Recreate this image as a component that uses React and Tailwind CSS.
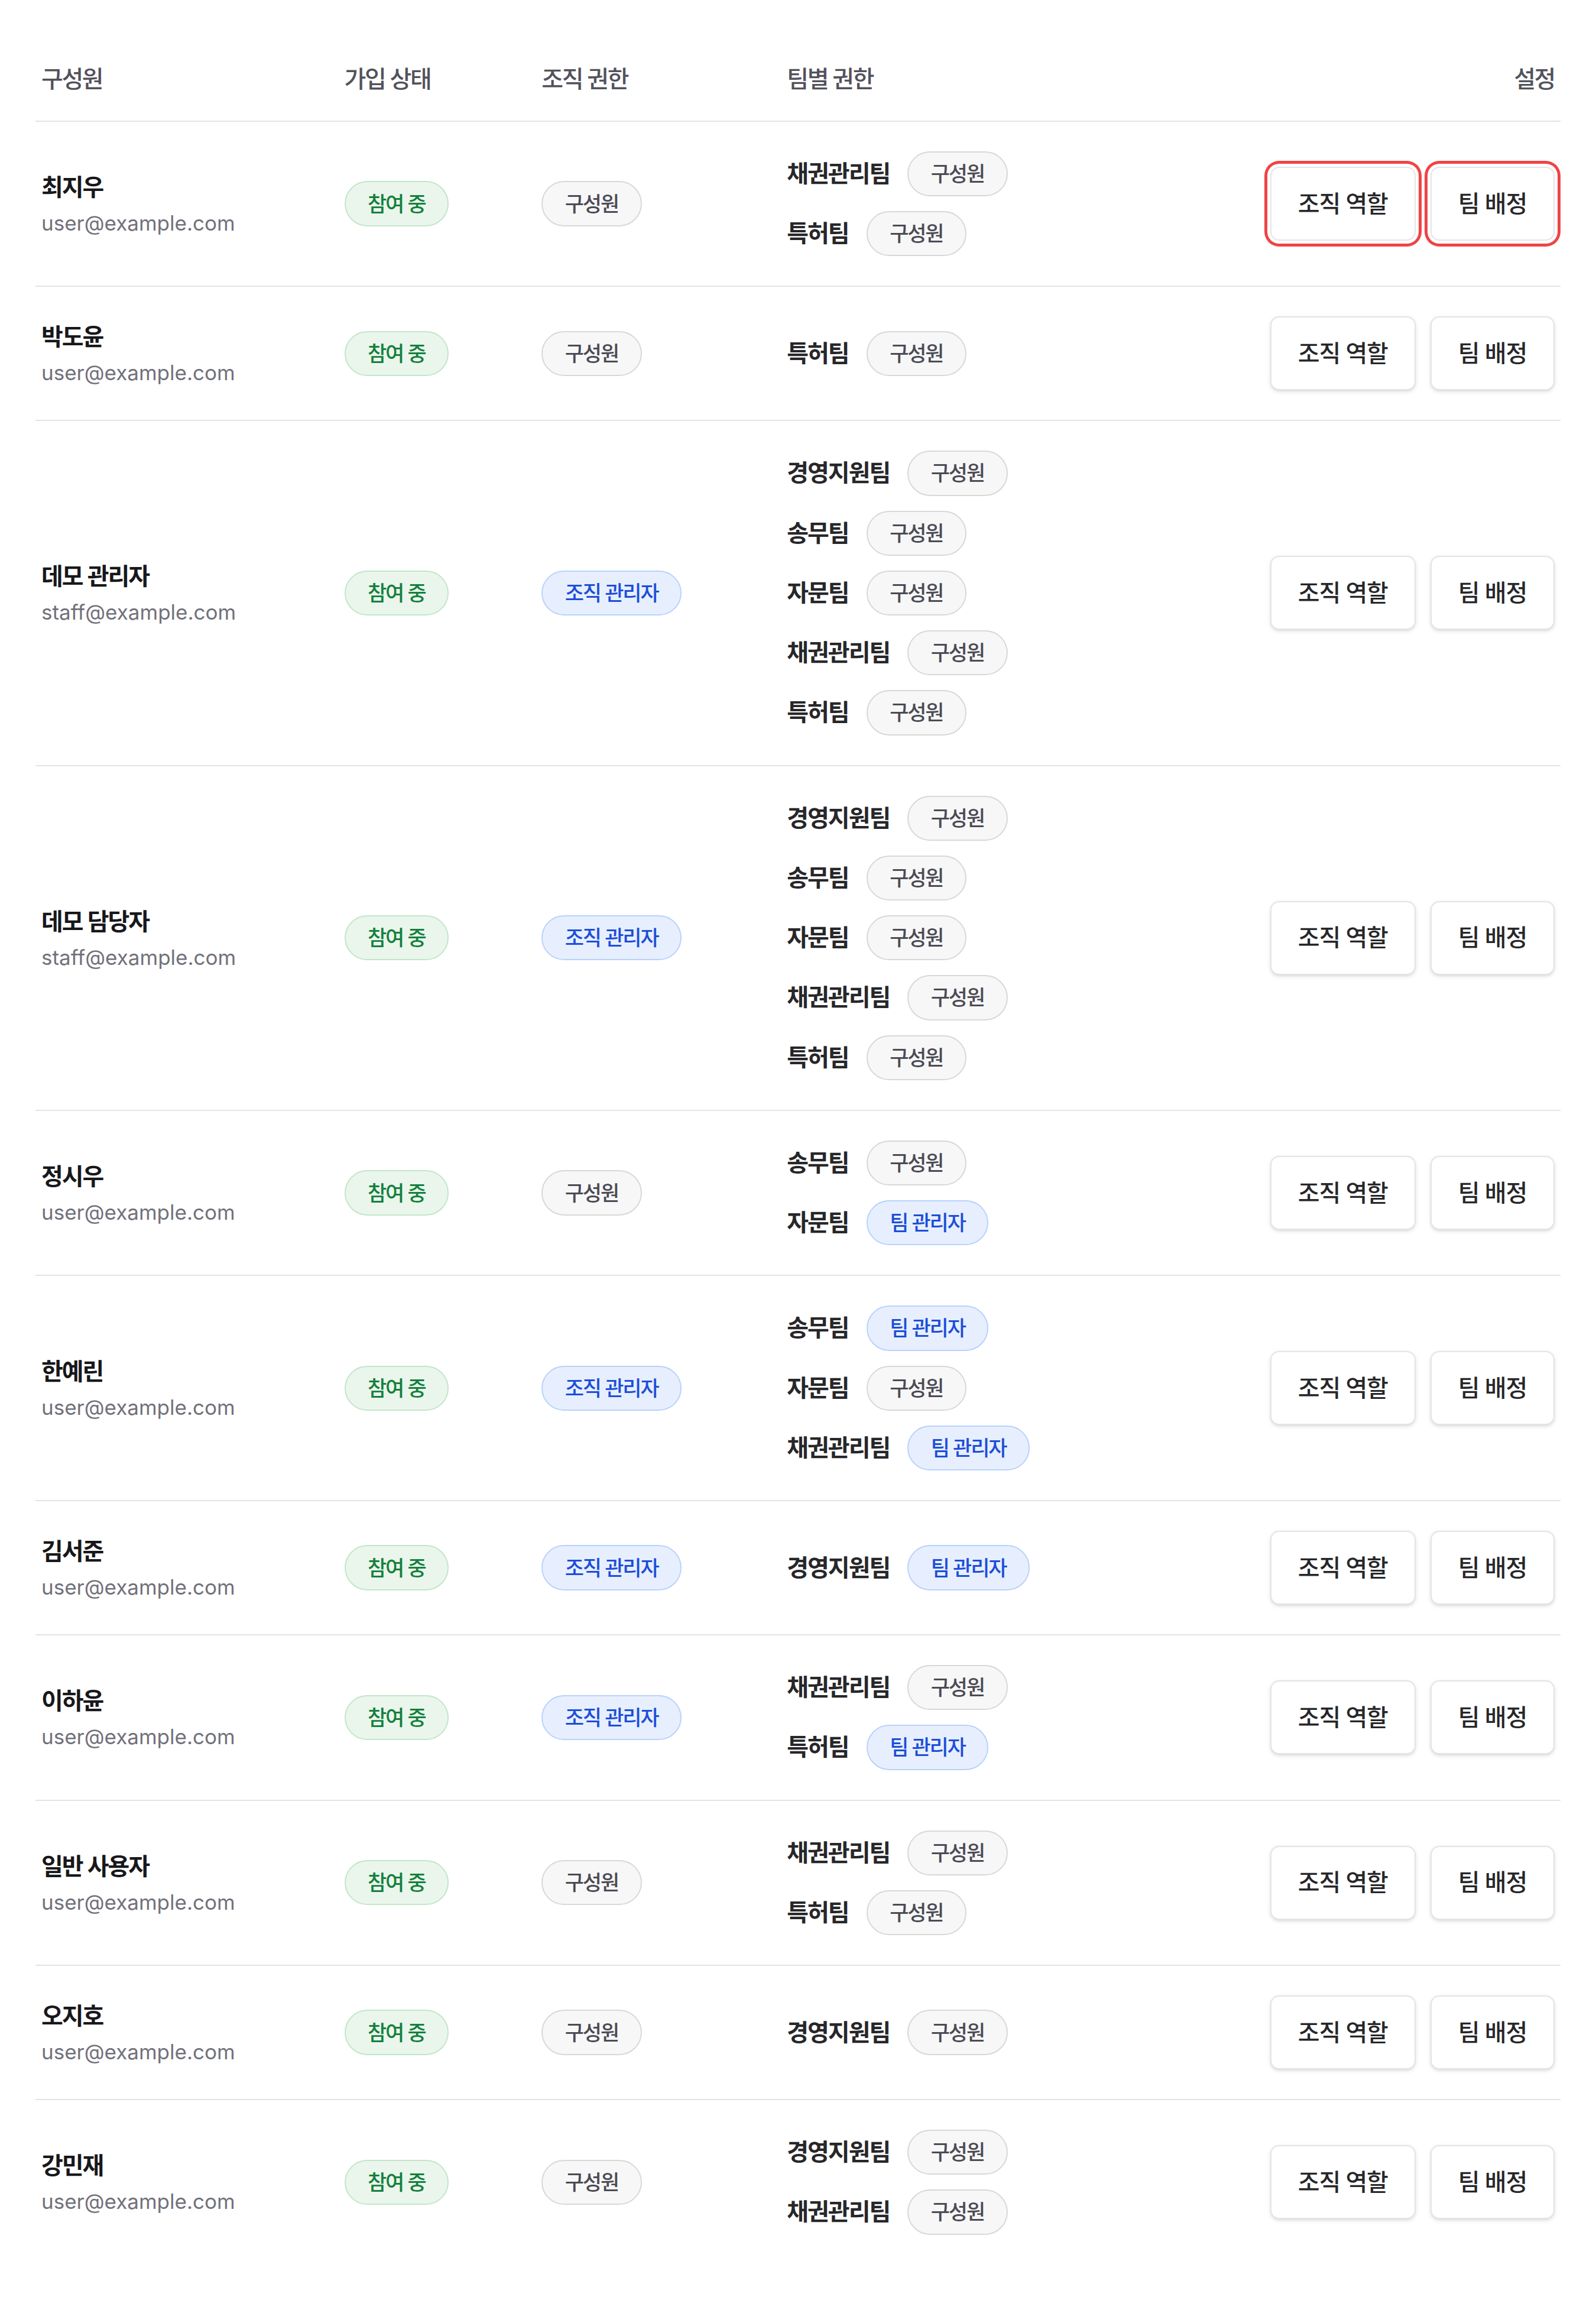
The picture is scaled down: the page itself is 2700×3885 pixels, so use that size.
import React from 'react';

const members = [
  {
    name: '최지우',
    email: 'user@example.com',
    org: 'member',
    teams: [
      ['채권관리팀', 'member'],
      ['특허팀', 'member'],
    ],
    focused: true,
  },
  { name: '박도윤', email: 'user@example.com', org: 'member', teams: [['특허팀', 'member']] },
  {
    name: '데모 관리자',
    email: 'staff@example.com',
    org: 'admin',
    teams: [
      ['경영지원팀', 'member'],
      ['송무팀', 'member'],
      ['자문팀', 'member'],
      ['채권관리팀', 'member'],
      ['특허팀', 'member'],
    ],
  },
  {
    name: '데모 담당자',
    email: 'staff@example.com',
    org: 'admin',
    teams: [
      ['경영지원팀', 'member'],
      ['송무팀', 'member'],
      ['자문팀', 'member'],
      ['채권관리팀', 'member'],
      ['특허팀', 'member'],
    ],
  },
  {
    name: '정시우',
    email: 'user@example.com',
    org: 'member',
    teams: [
      ['송무팀', 'member'],
      ['자문팀', 'lead'],
    ],
  },
  {
    name: '한예린',
    email: 'user@example.com',
    org: 'admin',
    teams: [
      ['송무팀', 'lead'],
      ['자문팀', 'member'],
      ['채권관리팀', 'lead'],
    ],
  },
  { name: '김서준', email: 'user@example.com', org: 'admin', teams: [['경영지원팀', 'lead']] },
  {
    name: '이하윤',
    email: 'user@example.com',
    org: 'admin',
    teams: [
      ['채권관리팀', 'member'],
      ['특허팀', 'lead'],
    ],
  },
  {
    name: '일반 사용자',
    email: 'user@example.com',
    org: 'member',
    teams: [
      ['채권관리팀', 'member'],
      ['특허팀', 'member'],
    ],
  },
  { name: '오지호', email: 'user@example.com', org: 'member', teams: [['경영지원팀', 'member']] },
  {
    name: '강민재',
    email: 'user@example.com',
    org: 'member',
    teams: [
      ['경영지원팀', 'member'],
      ['채권관리팀', 'member'],
    ],
  },
];

const badgeTone = {
  green: 'bg-[#eaf6ec] border-[#c2e6ca] text-[#15803d]',
  gray: 'bg-[#f7f7f7] border-[#d8d8d8] text-[#4b4b55]',
  blue: 'bg-[#e7efff] border-[#b9d2fb] text-[#1d4ed8]',
};

const Badge = ({ tone, children }) => (
  <span
    className={`inline-flex h-[30.5px] items-center rounded-full border px-[15px] text-sm leading-5 font-medium tracking-[-0.06em] whitespace-nowrap ${badgeTone[tone]}`}
  >
    {children}
  </span>
);

const ActionButton = ({ focused, children }) => (
  <button
    type="button"
    className={`h-[50px] rounded-md border border-[#e4e4e7] bg-white px-[18px] text-base leading-6 font-medium tracking-[-0.03em] text-[#27272a] shadow-sm whitespace-nowrap ${
      focused ? 'ring-2 ring-[#ef4444] ring-offset-2' : ''
    }`}
  >
    {children}
  </button>
);

export default function App() {
  return (
    <div className="[zoom:2.5] bg-white p-6 font-['Inter','Noto_Sans_CJK_KR',sans-serif]">
      <table className="w-full table-fixed border-collapse">
        <colgroup>
          <col className="w-[205px]" />
          <col className="w-[133.5px]" />
          <col className="w-[166px]" />
          <col />
          <col className="w-[200px]" />
        </colgroup>
        <thead>
          <tr className="border-b border-[#e4e4e7]">
            <th className="px-1 pt-[17.5px] pb-4 text-left text-base leading-6 font-medium tracking-[-0.06em] text-[#52525b]">구성원</th>
            <th className="px-1 pt-[17.5px] pb-4 text-left text-base leading-6 font-medium tracking-[-0.06em] text-[#52525b]">가입 상태</th>
            <th className="px-1 pt-[17.5px] pb-4 text-left text-base leading-6 font-medium tracking-[-0.06em] text-[#52525b]">조직 권한</th>
            <th className="px-1 pt-[17.5px] pb-4 text-left text-base leading-6 font-medium tracking-[-0.06em] text-[#52525b]">팀별 권한</th>
            <th className="px-1 pt-[17.5px] pb-4 text-right text-base leading-6 font-medium tracking-[-0.06em] text-[#52525b]">설정</th>
          </tr>
        </thead>
        <tbody>
          {members.map((m, idx) => (
            <tr key={idx} className="border-b border-[#e4e4e7] last:border-b-0">
              {/* member */}
              <td className="px-1 py-5 align-middle">
                <div className="text-base leading-6 font-semibold tracking-[-0.05em] text-[#18181b]">{m.name}</div>
                <div className="mt-0.5 text-sm leading-5 text-[#71717a]">{m.email}</div>
              </td>

              {/* join status */}
              <td className="px-1 py-5 align-middle">
                <Badge tone="green">참여 중</Badge>
              </td>

              {/* org role */}
              <td className="px-1 py-5 align-middle">
                {m.org === 'admin' ? <Badge tone="blue">조직 관리자</Badge> : <Badge tone="gray">구성원</Badge>}
              </td>

              {/* team roles */}
              <td className="px-1 py-5 align-middle">
                <div className="flex flex-col gap-2.5">
                  {m.teams.map(([team, role]) => (
                    <div key={team} className="flex items-center gap-3">
                      <span className="text-base leading-6 font-semibold tracking-[-0.05em] text-[#27272a] whitespace-nowrap">
                        {team}
                      </span>
                      {role === 'lead' ? <Badge tone="blue">팀 관리자</Badge> : <Badge tone="gray">구성원</Badge>}
                    </div>
                  ))}
                </div>
              </td>

              {/* settings */}
              <td className="px-1 py-5 align-middle">
                <div className="flex justify-end gap-2.5">
                  <ActionButton focused={m.focused}>조직 역할</ActionButton>
                  <ActionButton focused={m.focused}>팀 배정</ActionButton>
                </div>
              </td>
            </tr>
          ))}
        </tbody>
      </table>
    </div>
  );
}
